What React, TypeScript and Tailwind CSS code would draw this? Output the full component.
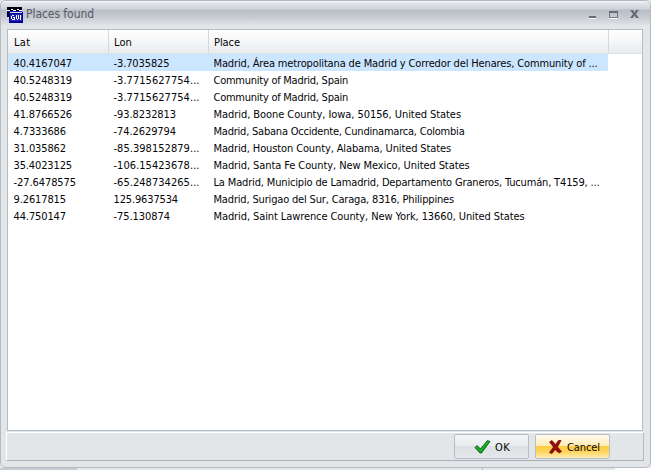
import { useLayoutEffect, useRef } from 'react';

// Single line of text whose tracking is adjusted so that it fills the given width.
function Fit({ text, width }: { text: string; width: number }) {
  const ref = useRef<HTMLSpanElement>(null);
  useLayoutEffect(() => {
    const el = ref.current;
    if (!el) return;
    el.style.letterSpacing = '0px';
    const natural = el.getBoundingClientRect().width;
    el.style.letterSpacing = `${(width - natural) / text.length}px`;
  }, [text, width]);
  return (
    <span ref={ref} className="inline-block whitespace-pre">
      {text}
    </span>
  );
}

type Cell = [string, number];
const rows: [Cell, Cell, Cell][] = [
  [['40.4167047', 58.5], ['-3.7035825', 56], ['Madrid, Área metropolitana de Madrid y Corredor del Henares, Community of ...', 384]],
  [['40.5248319', 58.5], ['-3.7715627754...', 86], ['Community of Madrid, Spain', 134.5]],
  [['40.5248319', 58.5], ['-3.7715627754...', 86], ['Community of Madrid, Spain', 134.5]],
  [['41.8766526', 58.5], ['-93.8232813', 62.5], ['Madrid, Boone County, Iowa, 50156, United States', 247.5]],
  [['4.7333686', 52.5], ['-74.2629794', 62.5], ['Madrid, Sabana Occidente, Cundinamarca, Colombia', 251]],
  [['31.035862', 52.5], ['-85.398152879...', 86], ['Madrid, Houston County, Alabama, United States', 237.5]],
  [['35.4023125', 58.5], ['-106.15423678...', 86], ['Madrid, Santa Fe County, New Mexico, United States', 256]],
  [['-27.6478575', 62.5], ['-65.248734265...', 86], ['La Madrid, Municipio de Lamadrid, Departamento Graneros, Tucumán, T4159, ...', 386]],
  [['9.2617815', 52.5], ['125.9637534', 64.5], ['Madrid, Surigao del Sur, Caraga, 8316, Philippines', 240.5]],
  [['44.750147', 52.5], ['-75.130874', 56.5], ['Madrid, Saint Lawrence County, New York, 13660, United States', 311]],
];

function AppIcon() {
  return (
    <svg className="mb-px" width="16" height="16" viewBox="0 0 16 16" shapeRendering="crispEdges">
      <path d="M0 0h15v10H0z" fill="#000010" />
      <path d="M0 3h3v1H0zM4 2h2v1H4zM6 3h3v1H6zM10 2h2v1h-2zM12 3h3v1h-3z" fill="#fff" />
      <path d="M0 4h15v1H0z" fill="#1717a0" />
      <path d="M2 5h14v11H2z" fill="#0000a0" />
      <path d="M3 5h12v1H3z" fill="#d5d8f0" />
      <path d="M3 7h12v7H3z" fill="#2020b4" />
      <path d="M5 8h2v1H5zM4 9h1v3H4zM5 12h3v1H5zM6 10h2v1H6zM7 11h1v1H7zM9 8h1v4H9zM10 12h1v1h-1zM11 8h1v4h-1zM13 8h1v5h-1z" fill="#fff" />
    </svg>
  );
}

function HeaderCell({ text, width, className }: { text: string; width: number; className: string }) {
  return (
    <div className={`box-border flex h-full items-center border-r border-[#d3d8dd] pt-[2px] ${className}`}>
      <Fit text={text} width={width} />
    </div>
  );
}

export default function App() {
  return (
    <div className="flex h-[470px] w-[651px] flex-col overflow-hidden bg-[#e4e7ea] font-['DejaVu_Sans_Condensed','DejaVu_Sans',sans-serif] text-[11px] leading-[17px] text-[#050508] [font-stretch:condensed]">
      <div className="flex h-[468px] w-[651px] flex-col rounded-[6px] border border-[#b3bac2] bg-[#e2e6e9]">
        <header className="flex h-[28px] shrink-0 items-center rounded-t-[5px] bg-[linear-gradient(#f4f5f7_0px,#dfe2e6_3px,#cfd3d8_8px,#b9bec6_9px,#c6cad0_16px,#e2e6e9_25px)] pl-[6px]">
          <AppIcon />
          <span className="mb-[2px] ml-[3px] text-[12px] text-[#555b64]">
            <Fit text="Places found" width={68} />
          </span>
          <svg className="mb-[2px] ml-auto mr-[9px]" width="54" height="12" viewBox="0 0 54 12" shapeRendering="crispEdges">
            <path d="M2 10h7v1H2zM22 10h9v1h-9z" fill="#f8fafb" />
            <path d="M2 8h7v2H2z" fill="#656c77" />
            <path d="M22 3h9v7h-9zM23 5v4h7V5z" fill="#737b86" fillRule="evenodd" />
            <path d="M22 3h9v2h-9z" fill="#656c77" />
            <path d="M43 2h3l1.500 2.500L49 2h3l-3 4 3 4h-3l-1.500-2.500L46 10h-3l3-4z" fill="#656c77" shapeRendering="auto" />
          </svg>
        </header>

        <main className="ml-[6px] flex h-[402px] w-[636px] shrink-0 flex-col border border-[#b3bdc5] bg-white">
          <div className="flex h-[24px] shrink-0 border-b border-[#e0e3e5] bg-[linear-gradient(#ffffff_0%,#f5f6f7_50%,#e9ebed_100%)]">
            <HeaderCell text="Lat" width={16.5} className="w-[101px] pl-[6px]" />
            <HeaderCell text="Lon" width={18} className="w-[100px] pl-[5px]" />
            <HeaderCell text="Place" width={26} className="w-[400px] pl-[5px]" />
          </div>
          {rows.map(([lat, lon, place], i) => (
            <div key={i} className={`flex h-[17px] w-[600px] shrink-0 pt-px ${i === 0 ? 'bg-[#cce6ff]' : ''}`}>
              <div className="w-[100px] pl-[5.500px]"><Fit text={lat[0]} width={lat[1]} /></div>
              <div className="w-[100px] pl-[5.500px]"><Fit text={lon[0]} width={lon[1]} /></div>
              <div className="w-[400px] pl-[5.500px]"><Fit text={place[0]} width={place[1]} /></div>
            </div>
          ))}
        </main>

        <footer className="ml-[5px] mt-px flex h-[29px] w-[638px] shrink-0 items-center justify-end gap-[6px] border border-b-[#a9b0b7] border-l-white border-r-[#b3bac2] border-t-white bg-[#e2e6e9] pr-[33px]">
          <button className="flex h-[25px] w-[75px] items-center rounded-[2px] border border-[#b7bdc4] bg-[linear-gradient(#f4f5f6_0%,#e9ebed_48%,#dce0e4_50%,#e5e8eb_100%)] pl-[19px]">
            <svg width="18" height="16" viewBox="0 0 18 16">
              <path d="M1 8.500 3 6.500l3.500 3.500L13.500 1.500l2.500 1L7.500 14H6z" fill="#09a51b" stroke="#064b12" strokeWidth=".8" strokeLinejoin="round" />
              <path d="m2.500 8 4 4 8-9.500" fill="none" stroke="#22c52b" strokeWidth="1" />
            </svg>
            <span className="ml-[3px] mt-[2px]"><Fit text="OK" width={15} /></span>
          </button>
          <button className="flex h-[25px] w-[75px] items-center rounded-[2px] border border-[#b7bdc4] bg-[linear-gradient(#fffbf0_0%,#ffecb5_46%,#ffce42_50%,#ffd45c_72%,#ffedb4_100%)] pl-[12px]">
            <svg width="16" height="16" viewBox="0 0 16 16">
              <path d="M1.500 3 4 1.500 7.500 5.500 10.500 1.500h2.500L9.500 8l4 4.500-2.500 1.500L7 10.500 4 14.500l-2.500-1L5.500 8z" fill="#930d0a" stroke="#7c0805" strokeWidth=".8" strokeLinejoin="round" />
            </svg>
            <span className="ml-[3px] mt-[2px]"><Fit text="Cancel" width={33} /></span>
          </button>
        </footer>
      </div>
      <div className="flex h-[2px]">
        <div className="w-[77px] bg-[#c6cbd0]" />
        <div className="w-[405px] bg-[#e4e7ea]" />
        <div className="w-px bg-[#b3bac2]" />
        <div className="w-[132px] bg-[#e4e7ea]" />
        <div className="flex-1 bg-white" />
      </div>
    </div>
  );
}
